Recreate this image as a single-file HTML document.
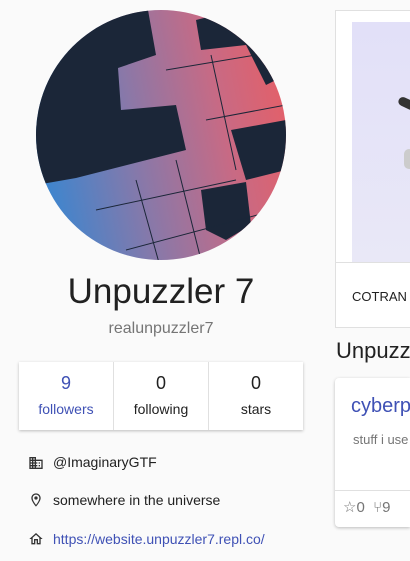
<!DOCTYPE html>
<html style="overflow:hidden"><head><style>
html,body{overflow:hidden}
body{margin:0;width:410px;height:561px;background:#fafafa;font-family:"Liberation Sans",sans-serif;position:relative}
.a{position:absolute}
</style></head><body>
<svg class="a" style="left:36px;top:10px" width="250" height="250" viewBox="0 0 250 250">
<defs><linearGradient id="g" x1="0" y1="0.6" x2="1" y2="0.4"><stop offset="0" stop-color="#3a86d0"/><stop offset="0.4" stop-color="#8a78a8"/><stop offset="0.75" stop-color="#c86a84"/><stop offset="1" stop-color="#e2606a"/></linearGradient>
<clipPath id="c"><circle cx="125" cy="125" r="125"/></clipPath></defs>
<g clip-path="url(#c)">
<rect width="250" height="250" fill="url(#g)"/>
<path d="M0 0 L112 0 L120 45 L82 58 L85 100 L140 95 L150 140 L40 168 L0 175Z" fill="#1b2638"/>
<path d="M160 10 L200 0 L260 60 L230 75 L210 35 L165 40Z" fill="#1b2638"/>
<path d="M195 120 L250 110 L250 160 L210 170Z" fill="#1b2638"/>
<path d="M165 180 L210 172 L215 215 L190 230 L170 220Z" fill="#1b2638"/>
<g stroke="#1b2638" fill="none" stroke-width="1"><path d="M60 200 L200 170 M90 240 L240 200 M130 60 L250 40 M170 110 L250 95 M100 170 L125 260 M140 150 L165 250 M175 45 L200 160"/></g>
</g></svg>
<div class="a" style="left:0;width:322px;top:272px;text-align:center;font-size:35px;color:#212121">Unpuzzler 7</div>
<div class="a" style="left:0;width:322px;top:320px;text-align:center;font-size:16px;color:#757575">realunpuzzler7</div>
<div class="a" style="left:19px;top:362px;width:284px;height:68px;background:#fff;box-shadow:0 1px 3px rgba(0,0,0,.25);display:flex">
<div style="flex:1;text-align:center;border-right:1px solid #e0e0e0;color:#3f51b5"><div style="font-size:18px;margin-top:11px">9</div><div style="font-size:14px;margin-top:7px">followers</div></div>
<div style="flex:1;text-align:center;border-right:1px solid #e0e0e0;color:#212121"><div style="font-size:18px;margin-top:11px">0</div><div style="font-size:14px;margin-top:7px">following</div></div>
<div style="flex:1;text-align:center;color:#212121"><div style="font-size:18px;margin-top:11px">0</div><div style="font-size:14px;margin-top:7px">stars</div></div>
</div>
<svg class="a" style="left:28px;top:455px" width="16" height="16" viewBox="0 0 24 24"><path fill="#333" d="M12 7V3H2v18h20V7H12zM6 19H4v-2h2v2zm0-4H4v-2h2v2zm0-4H4V9h2v2zm0-4H4V5h2v2zm4 12H8v-2h2v2zm0-4H8v-2h2v2zm0-4H8V9h2v2zm0-4H8V5h2v2zm10 12h-8v-2h2v-2h-2v-2h2v-2h-2V9h8v10zm-2-8h-2v2h2v-2zm0 4h-2v2h2v-2z"/></svg>
<div class="a" style="left:53px;top:454px;font-size:14px;color:#212121">@ImaginaryGTF</div>
<svg class="a" style="left:28px;top:492px" width="16" height="16" viewBox="0 0 24 24"><path fill="#333" d="M12 2C8.1 2 5 5.1 5 9c0 5.2 7 13 7 13s7-7.8 7-13c0-3.9-3.1-7-7-7zm0 17.3C10 16.8 7 12.4 7 9c0-2.8 2.2-5 5-5s5 2.2 5 5c0 3.5-3 7.900-5 10.3zM12 6.5a2.5 2.5 0 100 5 2.5 2.5 0 000-5z"/></svg>
<div class="a" style="left:53px;top:492px;font-size:14px;color:#212121">somewhere in the universe</div>
<svg class="a" style="left:28px;top:531px" width="16" height="16" viewBox="0 0 24 24"><path fill="#333" d="M12 5.7l5 4.5V18h-2v-6H9v6H7v-7.8l5-4.5M12 3L2 12h3v8h6v-6h2v6h6v-8h3L12 3z"/></svg>
<div class="a" style="left:53px;top:531px;font-size:14px;color:#3f51b5">https://website.unpuzzler7.repl.co/</div>
<div class="a" style="left:335px;top:10px;width:75px;height:318px;background:#fff;border:1px solid #e0e0e0;border-right:none;box-sizing:border-box;overflow:hidden">
<div style="position:absolute;left:16px;top:11px;width:80px;height:240px;background:linear-gradient(#e2e0f8,#e9e8f7)"></div>
<div style="position:absolute;left:62px;top:88px;width:18px;height:9px;background:#333;border-radius:5px;transform:rotate(25deg)"></div>
<div style="position:absolute;left:68px;top:138px;width:10px;height:20px;background:#ccc;border-radius:5px"></div>
<div style="position:absolute;left:0;top:251px;width:90px;border-top:1px solid #e0e0e0"></div>
<div style="position:absolute;left:16px;top:278px;font-size:13px;color:#212121;white-space:nowrap">COTRAN</div></div>
<div class="a" style="left:336px;top:338px;font-size:22px;color:#212121;white-space:nowrap;width:74px;overflow:hidden">Unpuzzler</div>
<div class="a" style="left:335px;top:378px;width:75px;height:149px;background:#fff;border-radius:4px 0 0 4px;box-shadow:0 1px 3px rgba(0,0,0,.25);overflow:hidden;white-space:nowrap">
<div style="position:absolute;left:16px;top:17px;font-size:20px;color:#3f51b5">cyberpunk</div>
<div style="position:absolute;left:18px;top:54px;font-size:13px;color:#757575">stuff i use</div>
<div style="position:absolute;left:0;top:112px;width:90px;border-top:1px solid #e0e0e0"></div>
<div style="position:absolute;left:8px;top:120px;font-size:15px;color:#757575">☆0 &nbsp;⑂9</div></div>
</body></html>
